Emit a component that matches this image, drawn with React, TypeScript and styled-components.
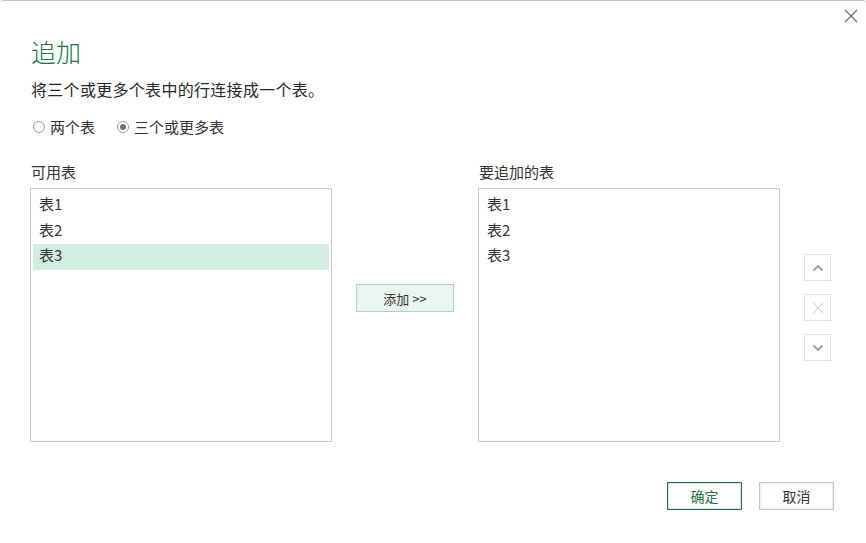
import React from 'react'
import styled, { createGlobalStyle } from 'styled-components'

const GlobalStyle = createGlobalStyle`
  html, body {
    margin: 0;
    padding: 0;
    background: #ffffff;
  }
  body {
    font-family: "Noto Sans CJK SC", "Noto Sans", sans-serif;
    color: #333333;
  }
`

const available = ['表1', '表2', '表3']
const toAppend = ['表1', '表2', '表3']

const App = () => {
  return (
    <>
      <GlobalStyle />
      <Dialog>
        <TopBar>
          <CloseButton aria-label="close">
            <svg width="14" height="14" viewBox="0 0 14 14">
              <path d="M1 1 L13 13 M13 1 L1 13" stroke="#6e6e6e" strokeWidth="1.3" fill="none" />
            </svg>
          </CloseButton>
        </TopBar>
        <Content>
          <Title>追加</Title>
          <Subtitle>将三个或更多个表中的行连接成一个表。</Subtitle>
          <RadioRow>
            <RadioOption>
              <RadioCircle />
              <RadioLabel>两个表</RadioLabel>
            </RadioOption>
            <RadioOption>
              <RadioCircle checked />
              <RadioLabel>三个或更多表</RadioLabel>
            </RadioOption>
          </RadioRow>

          <Lists>
            <ListColumn>
              <ListLabel>可用表</ListLabel>
              <ListBox>
                {available.map((t, i) => (
                  <ListItem key={t} selected={i === 2}>{t}</ListItem>
                ))}
              </ListBox>
            </ListColumn>

            <Middle>
              <AddButton>添加 &gt;&gt;</AddButton>
            </Middle>

            <ListColumn>
              <ListLabel>要追加的表</ListLabel>
              <ListBox>
                {toAppend.map(t => (
                  <ListItem key={t}>{t}</ListItem>
                ))}
              </ListBox>
            </ListColumn>

            <SideButtons>
              <SideButton>
                <svg width="12" height="8" viewBox="0 0 12 8">
                  <path d="M1.5 6.5 L6 2 L10.5 6.5" stroke="#a3a3a3" strokeWidth="2" fill="none" />
                </svg>
              </SideButton>
              <SideButton>
                <svg width="12" height="12" viewBox="0 0 12 12">
                  <path d="M1 1 L11 11 M11 1 L1 11" stroke="#dcdcdc" strokeWidth="1.2" fill="none" />
                </svg>
              </SideButton>
              <SideButton>
                <svg width="12" height="8" viewBox="0 0 12 8">
                  <path d="M1.5 1.5 L6 6 L10.5 1.5" stroke="#a3a3a3" strokeWidth="2" fill="none" />
                </svg>
              </SideButton>
            </SideButtons>
          </Lists>

          <Footer>
            <PrimaryButton>确定</PrimaryButton>
            <SecondaryButton>取消</SecondaryButton>
          </Footer>
        </Content>
      </Dialog>
    </>
  )
}

export default App

const Dialog = styled.div`
  width: 866px;
  height: 543px;
  box-sizing: border-box;
  border-top: 1px solid #c4c4c4;
  border-radius: 3px 3px 0 0;
  background: #ffffff;
  overflow: hidden;
`

const TopBar = styled.div`
  display: flex;
  justify-content: flex-end;
  height: 29px;
  padding-right: 7px;
`

const CloseButton = styled.div`
  display: flex;
  align-items: center;
  justify-content: center;
  width: 16px;
  height: 16px;
  margin-top: 7px;
`

const Content = styled.div`
  display: flex;
  flex-direction: column;
  padding: 0 32px 0 31px;
`

const Title = styled.h1`
  margin: 6px 0 0;
  font-size: 25px;
  line-height: 30px;
  font-weight: 300;
  color: #217346;
`

const Subtitle = styled.p`
  margin: 13px 0 0;
  font-size: 16px;
  line-height: 20px;
  letter-spacing: 0.3px;
  color: #262626;
`

const RadioRow = styled.div`
  display: flex;
  gap: 20px;
  margin-top: 18px;
  height: 20px;
  align-items: center;
`

const RadioOption = styled.label`
  display: flex;
  align-items: center;
  gap: 5px;
  padding-left: 2px;
`

const RadioCircle = styled.span<{ checked?: boolean }>`
  display: inline-flex;
  align-items: center;
  justify-content: center;
  width: 12px;
  height: 12px;
  box-sizing: border-box;
  border: 1px solid #9a9a9a;
  border-radius: 50%;
  background: #ffffff;
  &::after {
    content: '';
    display: ${p => (p.checked ? 'block' : 'none')};
    width: 6px;
    height: 6px;
    border-radius: 50%;
    background: #707070;
  }
`

const RadioLabel = styled.span`
  font-size: 15px;
  line-height: 20px;
  color: #333333;
`

const Lists = styled.div`
  display: flex;
  margin-top: 25px;
  margin-left: -1px;
`

const ListColumn = styled.div`
  display: flex;
  flex-direction: column;
  width: 302px;
`

const ListLabel = styled.div`
  font-size: 15px;
  line-height: 20px;
  padding-left: 1px;
  margin-bottom: 6px;
  color: #333333;
`

const ListBox = styled.div`
  display: flex;
  flex-direction: column;
  height: 254px;
  box-sizing: border-box;
  border: 1px solid #c6c6c6;
  padding: 4px 2px;
`

const ListItem = styled.div<{ selected?: boolean }>`
  height: 25.5px;
  line-height: 22px;
  padding-left: 6px;
  font-size: 15px;
  color: #333333;
  background: ${p => (p.selected ? '#d3eee0' : 'transparent')};
`

const Middle = styled.div`
  display: flex;
  justify-content: center;
  width: 146px;
  padding-top: 122px;
`

const AddButton = styled.button`
  width: 98px;
  height: 28px;
  box-sizing: border-box;
  border: 1px solid #a6d8bb;
  background: #e9f5ee;
  font-family: "Noto Sans CJK SC", "Noto Sans", sans-serif;
  font-size: 13px;
  color: #333333;
  padding: 0;
`

const SideButtons = styled.div`
  display: flex;
  flex-direction: column;
  gap: 13px;
  margin-left: 24px;
  padding-top: 92px;
`

const SideButton = styled.div`
  display: flex;
  align-items: center;
  justify-content: center;
  width: 27px;
  height: 27px;
  box-sizing: border-box;
  border: 1px solid #e0e0e0;
  background: #ffffff;
`

const Footer = styled.div`
  display: flex;
  justify-content: flex-end;
  gap: 17px;
  margin-top: 40px;
`

const BaseButton = styled.button`
  width: 75px;
  height: 28px;
  box-sizing: border-box;
  background: #ffffff;
  font-family: "Noto Sans CJK SC", "Noto Sans", sans-serif;
  font-size: 14px;
  padding: 0;
`

const PrimaryButton = styled(BaseButton)`
  border: 1px solid #217346;
  box-shadow: inset 0 0 0 1px #cfe6d9;
  color: #217346;
`

const SecondaryButton = styled(BaseButton)`
  border: 1px solid #c6c6c6;
  box-shadow: inset 0 0 0 1px #f0f0f0;
  color: #333333;
`
